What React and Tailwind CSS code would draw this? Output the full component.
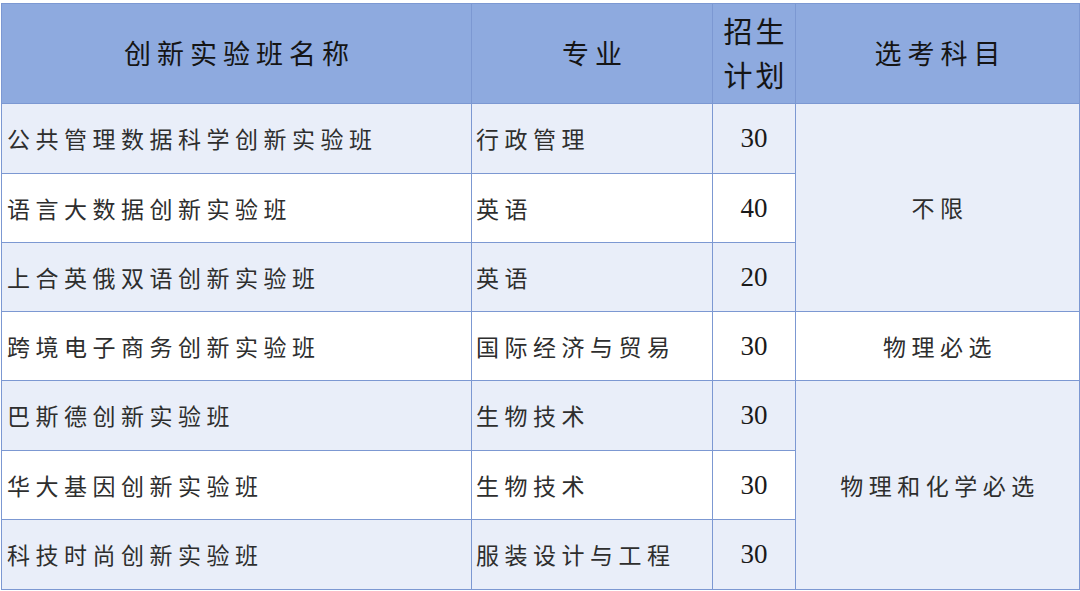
import React from "react";

const rows = [
  { name: "公共管理数据科学创新实验班", major: "行政管理", plan: "30", h: "h-[70px]", bg: "bg-[#e9eef9]" },
  { name: "语言大数据创新实验班", major: "英语", plan: "40", h: "h-[69px]", bg: "bg-white" },
  { name: "上合英俄双语创新实验班", major: "英语", plan: "20", h: "h-[69px]", bg: "bg-[#e9eef9]" },
  { name: "跨境电子商务创新实验班", major: "国际经济与贸易", plan: "30", h: "h-[69px]", bg: "bg-white" },
  { name: "巴斯德创新实验班", major: "生物技术", plan: "30", h: "h-[70px]", bg: "bg-[#e9eef9]" },
  { name: "华大基因创新实验班", major: "生物技术", plan: "30", h: "h-[69px]", bg: "bg-white" },
  { name: "科技时尚创新实验班", major: "服装设计与工程", plan: "30", h: "h-[70px]", bg: "bg-[#e9eef9]" },
];

// 选考科目 column spans: 不限 x3, 物理必选 x1, 物理和化学必选 x3
const subjects = {
  0: { text: "不限", span: 3, bg: "bg-[#e9eef9]" },
  3: { text: "物理必选", span: 1, bg: "bg-white" },
  4: { text: "物理和化学必选", span: 3, bg: "bg-[#e9eef9]" },
};

const cjk = "font-['Noto_Sans_CJK_SC',sans-serif]";
const cell = "border border-[#7c98d2] p-0";

export default function App() {
  return (
    <div className="w-[1080px] h-[591px] bg-white pt-[3px] pl-[1px] overflow-hidden">
      <table className={`table-fixed border-collapse w-[1078px] ${cjk}`}>
        <colgroup>
          <col className="w-[470px]" />
          <col className="w-[241px]" />
          <col className="w-[83px]" />
          <col className="w-[284px]" />
        </colgroup>
        <thead>
          <tr className="h-[100px] bg-[#8eaadf] text-[#151515]">
            <th className={`${cell} pl-[6px] text-[27px] font-normal tracking-[6px] text-center`}>创新实验班名称</th>
            <th className={`${cell} pl-[6px] text-[27px] font-normal tracking-[6px] text-center`}>专业</th>
            <th className={`${cell} pl-[3px] pb-[4px] text-[29px] font-normal leading-[44px] tracking-[3px] text-center`}>
              招生<br />计划
            </th>
            <th className={`${cell} pl-[6px] text-[27px] font-normal tracking-[6px] text-center`}>选考科目</th>
          </tr>
        </thead>
        <tbody className="text-[#2e2e2e]">
          {rows.map((r, i) => (
            <tr key={i} className={`${r.h} ${r.bg}`}>
              <td className={`${cell} pl-[5px] text-[23px] tracking-[5.5px] whitespace-nowrap`}>{r.name}</td>
              <td className={`${cell} pl-[4px] text-[23px] tracking-[5.5px] whitespace-nowrap`}>{r.major}</td>
              <td className={`${cell} text-center text-[27px] font-['Liberation_Serif',serif] text-[#1a1a1a]`}>{r.plan}</td>
              {subjects[i] && (
                <td
                  rowSpan={subjects[i].span}
                  className={`${cell} ${subjects[i].bg} pl-[5px] text-center text-[23px] tracking-[5.5px]`}
                >
                  {subjects[i].text}
                </td>
              )}
            </tr>
          ))}
        </tbody>
      </table>
    </div>
  );
}
